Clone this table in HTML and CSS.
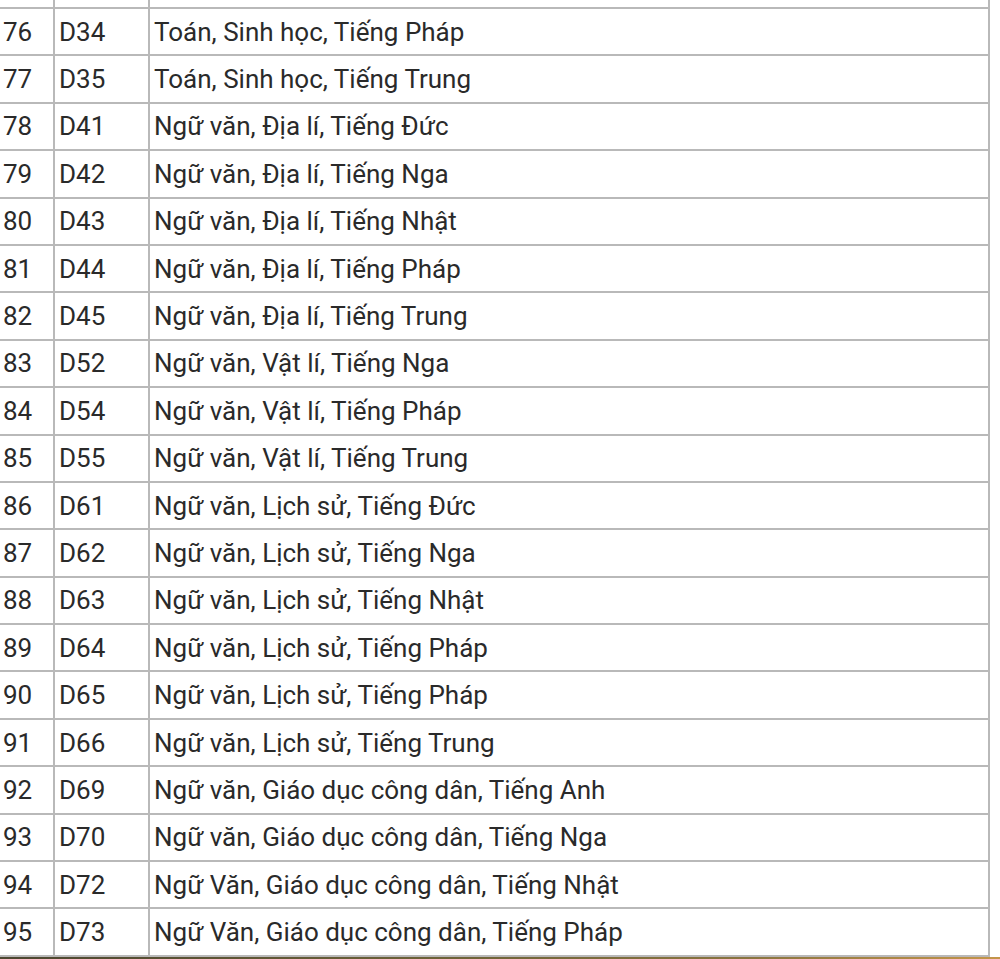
FILE: index.html
```html
<!DOCTYPE html>
<html lang="vi">
<head>
<meta charset="utf-8">
<title>Tổ hợp môn</title>
<link rel="stylesheet" href="styles.css">
</head>
<body>
<div class="page">
<table class="combo">
<colgroup><col class="c-no"><col class="c-code"><col class="c-subj"></colgroup>
<tbody>
<tr class="cut"><td></td><td></td><td></td></tr>
<tr><td>76</td><td>D34</td><td>Toán, Sinh học, Tiếng Pháp</td></tr>
<tr><td>77</td><td>D35</td><td>Toán, Sinh học, Tiếng Trung</td></tr>
<tr><td>78</td><td>D41</td><td>Ngữ văn, Địa lí, Tiếng Đức</td></tr>
<tr><td>79</td><td>D42</td><td>Ngữ văn, Địa lí, Tiếng Nga</td></tr>
<tr><td>80</td><td>D43</td><td>Ngữ văn, Địa lí, Tiếng Nhật</td></tr>
<tr><td>81</td><td>D44</td><td>Ngữ văn, Địa lí, Tiếng Pháp</td></tr>
<tr><td>82</td><td>D45</td><td>Ngữ văn, Địa lí, Tiếng Trung</td></tr>
<tr><td>83</td><td>D52</td><td>Ngữ văn, Vật lí, Tiếng Nga</td></tr>
<tr><td>84</td><td>D54</td><td>Ngữ văn, Vật lí, Tiếng Pháp</td></tr>
<tr><td>85</td><td>D55</td><td>Ngữ văn, Vật lí, Tiếng Trung</td></tr>
<tr><td>86</td><td>D61</td><td>Ngữ văn, Lịch sử, Tiếng Đức</td></tr>
<tr><td>87</td><td>D62</td><td>Ngữ văn, Lịch sử, Tiếng Nga</td></tr>
<tr><td>88</td><td>D63</td><td>Ngữ văn, Lịch sử, Tiếng Nhật</td></tr>
<tr><td>89</td><td>D64</td><td>Ngữ văn, Lịch sử, Tiếng Pháp</td></tr>
<tr><td>90</td><td>D65</td><td>Ngữ văn, Lịch sử, Tiếng Pháp</td></tr>
<tr><td>91</td><td>D66</td><td>Ngữ văn, Lịch sử, Tiếng Trung</td></tr>
<tr><td>92</td><td>D69</td><td>Ngữ văn, Giáo dục công dân, Tiếng Anh</td></tr>
<tr><td>93</td><td>D70</td><td>Ngữ văn, Giáo dục công dân, Tiếng Nga</td></tr>
<tr><td>94</td><td>D72</td><td>Ngữ Văn, Giáo dục công dân, Tiếng Nhật</td></tr>
<tr><td>95</td><td>D73</td><td>Ngữ Văn, Giáo dục công dân, Tiếng Pháp</td></tr>
</tbody>
</table>
<div class="footer-bar"></div>
</div>
</body>
</html>
```
FILE: styles.css
```css
html, body {
  margin: 0;
  padding: 0;
  background: #ffffff;
}
.page {
  width: 1000px;
  height: 959px;
  overflow: hidden;
}
.combo {
  margin: -38.4px 0 0 -3px;
  border-collapse: separate;
  border-spacing: 0;
  table-layout: fixed;
  width: 993px;
  border-left: 2px solid #b9b9b9;
  font-family: Roboto, "Noto Sans", sans-serif;
  font-size: 26px;
  color: #2a2a2a;
}
.c-no { width: 56px; }
.c-code { width: 95px; }
.c-subj { width: 840px; }
.combo td {
  box-sizing: border-box;
  height: 47.4px;
  padding: 0 0 0 4px;
  border-right: 2px solid #b9b9b9;
  border-bottom: 2px solid #b9b9b9;
  vertical-align: middle;
  white-space: nowrap;
  line-height: 1;
}
.footer-bar {
  height: 3px;
  background: linear-gradient(to right, #4c4630, #6e6238 45%, #8a7440 75%, #c4954a);
}
```
